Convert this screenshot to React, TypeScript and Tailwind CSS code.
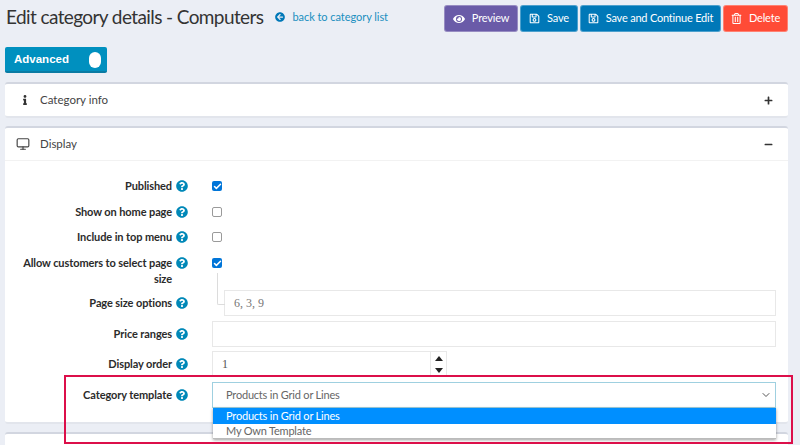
import type { ReactNode } from "react";
import {
  FaArrowCircleLeft,
  FaEye,
  FaInfo,
  FaMinus,
  FaPlus,
  FaQuestionCircle,
  FaRegSave,
  FaRegTrashAlt,
} from "react-icons/fa";
import { Check, ChevronDown, Monitor } from "lucide-react";

const Help = () => (
  <FaQuestionCircle size={12} className="ml-[4px] shrink-0 text-[#0088b8]" />
);

const Row = ({
  label,
  height,
  mt = 0,
  children,
}: {
  label: ReactNode;
  height: string;
  mt?: number;
  children: ReactNode;
}) => (
  <div className={`flex items-center ${height}`} style={{ marginTop: mt }}>
    <div className="flex w-[167px] shrink-0 justify-end text-right text-[11px] leading-[16px] font-bold tracking-[-0.1px] whitespace-nowrap text-[#2b2b2b]">
      <span>{label}</span>
    </div>
    <div className="flex w-[40px] shrink-0 self-stretch items-center">
      <Help />
    </div>
    <div className="flex min-w-0 flex-1 items-center">{children}</div>
  </div>
);

const Box = ({ checked }: { checked?: boolean }) =>
  checked ? (
    <span className="flex h-[10px] w-[10px] items-center justify-center rounded-[2px] bg-[#0075d8]">
      <Check size={9} strokeWidth={4} className="text-white" />
    </span>
  ) : (
    <span className="h-[10px] w-[10px] rounded-[2px] border border-[#9a9a9a] bg-white" />
  );

const ActionButton = ({
  color,
  width,
  icon,
  children,
}: {
  color: string;
  width: string;
  icon: ReactNode;
  children: ReactNode;
}) => (
  <button
    type="button"
    className={`flex h-[27px] items-center justify-center gap-[7px] rounded-[3px] border border-white/30 text-[11px] tracking-[-0.2px] whitespace-nowrap text-white ${color} ${width}`}
  >
    {icon}
    {children}
  </button>
);

export default function App() {
  return (
    <div className="relative h-[445px] w-[800px] overflow-hidden bg-[#ebeef5] font-['Lato',sans-serif] text-[#333]">
      <div className="flex h-[37px] items-start pt-[5px] pr-[12px] pl-[6px]">
        <h1 className="shrink-0 pt-[1px] text-[19px] leading-[22px] tracking-[-0.6px] whitespace-nowrap text-[#333]">
          Edit category details - Computers
        </h1>
        <a className="mt-[5px] ml-[12px] flex items-center gap-[7px] text-[11px] leading-[14px] tracking-[-0.05px] whitespace-nowrap text-[#1a8fc0]">
          <FaArrowCircleLeft size={10} className="text-[#0078b8]" />
          back to category list
        </a>
        <div className="ml-auto flex gap-[2px]">
          <ActionButton
            color="bg-[#6a5ba8]"
            width="w-[74px]"
            icon={<FaEye size={12} />}
          >
            Preview
          </ActionButton>
          <ActionButton
            color="bg-[#0078b8]"
            width="w-[58px]"
            icon={<FaRegSave size={11} />}
          >
            Save
          </ActionButton>
          <ActionButton
            color="bg-[#0078b8]"
            width="w-[141px]"
            icon={<FaRegSave size={11} />}
          >
            Save and Continue Edit
          </ActionButton>
          <ActionButton
            color="bg-[#ff4b36]"
            width="w-[65px]"
            icon={<FaRegTrashAlt size={11} />}
          >
            Delete
          </ActionButton>
        </div>
      </div>

      <div className="mt-[10px] ml-[5px] flex h-[26px] w-[102px] items-center justify-between rounded-[2px] border-b-2 border-[#0a7ba3] bg-[#0090bf] pt-[1px] pr-[6px] pl-[9px]">
        <span className="pt-[1px] font-['Liberation_Sans',sans-serif] text-[11.5px] font-bold text-white">
          Advanced
        </span>
        <span className="h-[16px] w-[12px] rounded-[6px] bg-white" />
      </div>

      <div className="mt-[9px] mr-[12px] ml-[5px] flex h-[36px] items-center justify-between rounded-[3px] border-t-[2px] border-b-[2px] border-t-[#d2d6e0] border-b-[#e2e5ec] bg-white pr-[15px] pl-[14px] text-[11.5px] text-[#444]">
        <span className="flex items-center">
          <span className="flex w-[21px] justify-start pl-[1px]">
            <FaInfo size={10} className="text-[#333]" />
          </span>
          Category info
        </span>
        <FaPlus size={9} className="text-[#333]" />
      </div>

      <div className="relative mt-[8px] mr-[12px] ml-[5px] h-[298px] rounded-[3px] border-t-[2px] border-b-[2px] border-t-[#d2d6e0] border-b-[#e2e5ec] bg-white">
        <div className="flex h-[33px] items-center justify-between border-b border-[#f2f2f2] pr-[15px] pl-[11px] text-[11.5px] text-[#444]">
          <span className="flex items-center">
            <Monitor size={14} className="mr-[10px] text-[#444]" />
            Display
          </span>
          <FaMinus size={9} className="text-[#333]" />
        </div>

        <div className="pt-[12px] pr-[12px]">
          <Row label="Published" height="h-[26px]">
            <Box checked />
          </Row>
          <Row label="Show on home page" height="h-[25px]">
            <Box />
          </Row>
          <Row label="Include in top menu" height="h-[25px]">
            <Box />
          </Row>
          <div className="flex h-[36px] pt-[6px]">
            <div className="flex w-[167px] shrink-0 justify-end text-right text-[11px] leading-[16px] font-bold tracking-[-0.1px] text-[#2b2b2b]">
              <span className="w-[150px]">
                Allow customers to select page size
              </span>
            </div>
            <div className="flex h-[16px] w-[40px] shrink-0 items-center">
              <Help />
            </div>
            <div className="flex h-[16px] items-center">
              <Box checked />
            </div>
          </div>
          <Row label="Page size options" height="h-[26px]" mt={5}>
            <div className="ml-[12px] flex h-[26px] w-full items-center border border-[#e8e8e8] pl-[9px] font-['Liberation_Serif',serif] text-[12px] text-[#777]">
              6, 3, 9
            </div>
          </Row>
          <Row label="Price ranges" height="h-[26px]" mt={5}>
            <div className="h-[26px] w-full border border-[#e8e8e8]" />
          </Row>
          <Row label="Display order" height="h-[26px]" mt={4}>
            <div className="flex h-[26px]">
              <div className="flex w-[218px] items-center border border-r-0 border-[#e8e8e8] pl-[9px] font-['Liberation_Serif',serif] text-[12px] text-[#555]">
                1
              </div>
              <div className="flex w-[17px] flex-col border border-[#e8e8e8] text-[#222]">
                <span className="flex h-1/2 items-center justify-center">
                  <span className="h-0 w-0 border-x-[4px] border-b-[5px] border-x-transparent border-b-[#222]" />
                </span>
                <span className="flex h-1/2 items-center justify-center">
                  <span className="h-0 w-0 border-x-[4px] border-t-[5px] border-x-transparent border-t-[#222]" />
                </span>
              </div>
            </div>
          </Row>
          <Row label="Category template" height="h-[26px]" mt={5}>
            <div className="flex h-[26px] w-full items-center justify-between border border-[#9fd0e0] pr-[3px] pl-[13px] text-[11px] tracking-[-0.2px] text-[#666]">
              Products in Grid or Lines
              <ChevronDown size={12} className="text-[#555]" />
            </div>
          </Row>
        </div>

        {/* tree line from the checkbox to the page size input */}
        <div className="absolute top-[145px] left-[212px] h-[32px] w-[8px] rounded-bl-[2px] border-b border-l border-[#dcdcdc]" />
      </div>

      <div className="mt-[8px] mr-[12px] ml-[5px] h-[20px] rounded-[3px] border-t-[2px] border-t-[#d2d6e0] bg-white" />

      {/* open select list */}
      <div className="absolute top-[408px] left-[213px] w-[563px] border-b border-[#bbb] bg-white text-[11px] leading-[14px] tracking-[-0.2px] shadow-[0_1px_3px_rgba(0,0,0,0.4)]">
        <div className="flex h-[16px] items-center bg-[#008fff] pl-[13px] text-white">
          Products in Grid or Lines
        </div>
        <div className="flex h-[14px] items-center pl-[13px] text-[#666]">
          My Own Template
        </div>
      </div>

      {/* red annotation box */}
      <div className="pointer-events-none absolute top-[375px] left-[64px] h-[69px] w-[729px] border-[2px] border-[#dc0f4a]" />
    </div>
  );
}
